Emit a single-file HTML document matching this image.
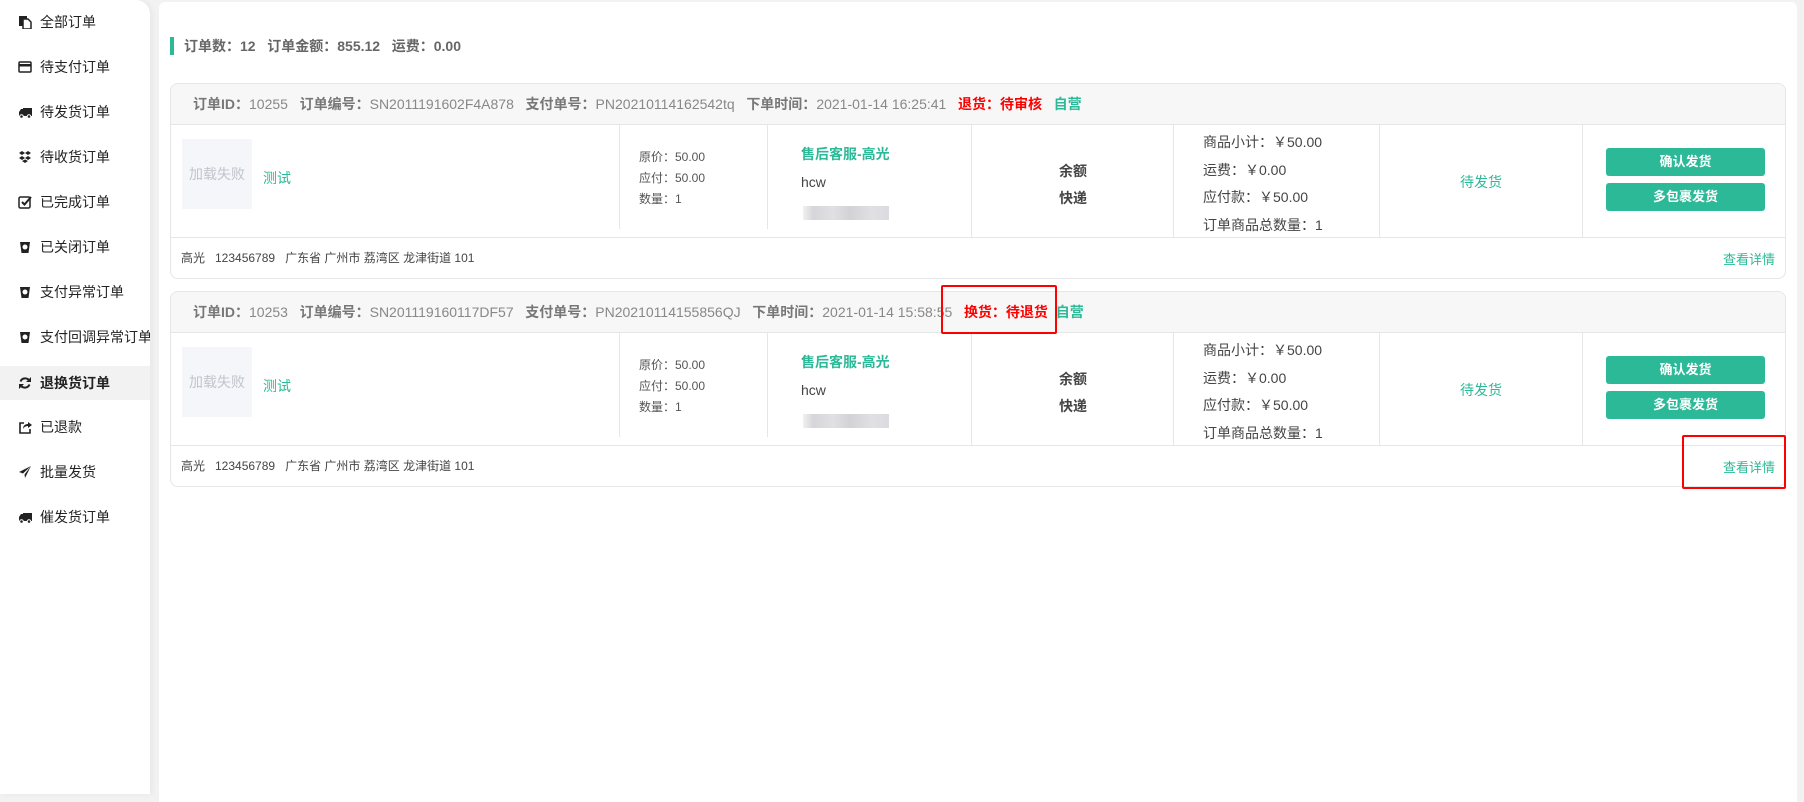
<!DOCTYPE html>
<html><head><meta charset="utf-8"><style>
*{margin:0;padding:0;box-sizing:border-box}
body{width:1804px;height:794px;background:#f2f2f2;font-family:"Liberation Sans","Noto Sans CJK SC",sans-serif;position:relative;overflow:hidden;color:#333}
.side{position:absolute;left:0;top:0;width:150px;height:794px;background:#fff;border-radius:0 14px 0 0;box-shadow:2px 0 6px rgba(0,0,0,.05)}
.it{position:absolute;left:0;width:150px;height:34px;line-height:34px;font-size:14px;color:#222;padding-left:40px;white-space:nowrap;overflow:hidden}
.it svg{position:absolute;left:18px;top:10px;width:14px;height:14px}
.it.act{background:#f2f2f2;font-weight:bold}
.main{position:absolute;left:159px;top:2px;width:1638px;height:800px;background:#fff;border-radius:6px 6px 0 0}
.sum{position:absolute;left:170px;top:37px;height:18px;border-left:4px solid #2bb997;padding-left:10px;font-size:14px;font-weight:bold;color:#666;line-height:18px;word-spacing:0}
.card{position:absolute;left:170px;width:1616px;height:196px;border:1px solid #e6e6e6;border-radius:8px;overflow:hidden;background:#fff}
.hd{height:41px;background:#f7f7f7;border-bottom:1px solid #e6e6e6;line-height:40px;padding-left:22px;font-size:14px;color:#888;white-space:nowrap}
.hd b{color:#777}
.hd .r{color:#f00;font-weight:bold}
.hd .g{color:#2bb997;font-weight:bold}
.abs{position:absolute;white-space:nowrap}
.vl{position:absolute;top:41px;width:1px;background:#e6e6e6}
.ft{position:absolute;left:0;top:153px;width:100%;border-top:1px solid #e6e6e6;height:42px}
.btn{position:absolute;left:1435px;width:159px;height:28px;background:#2bb997;border-radius:3px;color:#fff;font-size:13px;text-align:center;line-height:28px;font-weight:bold}
.red{position:absolute;border:2px solid #f00;border-radius:2px}
</style></head><body>
<div class="side">
<div class="it" style="top:5px"><svg viewBox="0 0 14 14"><rect x="1" y="1" width="8" height="10" fill="#222"/><path d="M5 4h5l3 3v7H5z" fill="#fff" stroke="#222" stroke-width="1.5"/></svg>全部订单</div>
<div class="it" style="top:50px"><svg viewBox="0 0 14 14"><rect x="1" y="2" width="12" height="10" rx="1" fill="none" stroke="#222" stroke-width="1.5"/><rect x="1" y="4" width="12" height="2.5" fill="#222"/></svg>待支付订单</div>
<div class="it" style="top:95px"><svg viewBox="0 0 14 14"><path d="M5 3h9v8H1V7l2-3h2z" fill="#222"/><circle cx="3.5" cy="11.5" r="1.8" fill="#222" stroke="#fff"/><circle cx="11" cy="11.5" r="1.8" fill="#222" stroke="#fff"/></svg>待发货订单</div>
<div class="it" style="top:140px"><svg viewBox="0 0 14 14"><path d="M4 1l3 2-3 2-3-2zM10 1l3 2-3 2-3-2zM4 6l3 2-3 2-3-2zM10 6l3 2-3 2-3-2zM4 11l3-1.5 3 1.5-3 2z" fill="#222"/></svg>待收货订单</div>
<div class="it" style="top:185px"><svg viewBox="0 0 14 14"><rect x="1" y="2" width="11" height="11" rx="1.5" fill="none" stroke="#222" stroke-width="1.5"/><path d="M4 7l2.5 2.5L13 2" fill="none" stroke="#222" stroke-width="2"/></svg>已完成订单</div>
<div class="it" style="top:230px"><svg viewBox="0 0 14 14"><path d="M2 2h10l-1.5 11h-7z" fill="#222"/><circle cx="7" cy="7" r="2.5" fill="#fff"/></svg>已关闭订单</div>
<div class="it" style="top:275px"><svg viewBox="0 0 14 14"><path d="M2 2h10l-1.5 11h-7z" fill="#222"/><circle cx="7" cy="7" r="2.5" fill="#fff"/></svg>支付异常订单</div>
<div class="it" style="top:320px"><svg viewBox="0 0 14 14"><path d="M2 2h10l-1.5 11h-7z" fill="#222"/><circle cx="7" cy="7" r="2.5" fill="#fff"/></svg>支付回调异常订单</div>
<div class="it act" style="top:366px"><svg viewBox="0 0 14 14"><path d="M11.5 5A5 5 0 0 0 2.5 5.5M2.5 9a5 5 0 0 0 9-.5" fill="none" stroke="#222" stroke-width="2"/><path d="M13 1v5H8zM1 13V8h5z" fill="#222"/></svg>退换货订单</div>
<div class="it" style="top:410px"><svg viewBox="0 0 14 14"><path d="M6 3H2v10h10V9" fill="none" stroke="#222" stroke-width="1.6"/><path d="M5 9c0-4 3-5 5-5V2l4 3-4 3V6c-2 0-4 1-5 3z" fill="#222"/></svg>已退款</div>
<div class="it" style="top:455px"><svg viewBox="0 0 14 14"><path d="M13 1L1 7l4 1.5L13 1 6.5 9.5 7 13z" fill="#222"/></svg>批量发货</div>
<div class="it" style="top:500px"><svg viewBox="0 0 14 14"><path d="M5 3h9v8H1V7l2-3h2z" fill="#222"/><circle cx="3.5" cy="11.5" r="1.8" fill="#222" stroke="#fff"/><circle cx="11" cy="11.5" r="1.8" fill="#222" stroke="#fff"/></svg>催发货订单</div>
</div>
<div class="main"></div>
<div class="sum">订单数：12 &nbsp; 订单金额：855.12 &nbsp; 运费：0.00</div>

<div class="card" style="top:83px">
<div class="hd"><b>订单ID：</b>10255 &nbsp; <b>订单编号：</b>SN2011191602F4A878 &nbsp; <b>支付单号：</b>PN20210114162542tq &nbsp; <b>下单时间：</b>2021-01-14 16:25:41 &nbsp; <span class="r">退货：待审核</span> &nbsp; <span class="g">自营</span></div>
<div class="vl" style="left:448px;height:104px"></div><div class="vl" style="left:596px;height:104px"></div><div class="vl" style="left:800px;height:112px"></div><div class="vl" style="left:1002px;height:112px"></div><div class="vl" style="left:1208px;height:112px"></div><div class="vl" style="left:1411px;height:112px"></div>
<div class="abs" style="left:11px;top:55px;width:70px;height:70px;background:#f5f6f9;color:#c0c4cc;font-size:14px;line-height:70px;text-align:center">加载失败</div>
<div class="abs" style="left:92px;top:84px;color:#2bb997;font-size:14px">测试</div>
<div class="abs" style="left:468px;top:63px;font-size:12px;line-height:21px;color:#555">原价：50.00<br>应付：50.00<br>数量：1</div>
<div class="abs" style="left:630px;top:60px;font-size:14px;color:#2bb997;font-weight:bold">售后客服-高光</div>
<div class="abs" style="left:630px;top:90px;font-size:14px;color:#444">hcw</div>
<div class="abs" style="left:632px;top:122px;width:86px;height:14px;background:linear-gradient(90deg,#f3f0ee 0,#d5d5da 12%,#e0e0e4 35%,#d3d3d7 55%,#e0e0e4 80%,#dcdce0)"></div>
<div class="abs" style="left:880px;top:74px;font-size:14px;font-weight:bold;line-height:27px;color:#444;text-align:center;width:44px">余额<br>快递</div>
<div class="abs" style="left:1032px;top:45px;font-size:14px;line-height:27.5px;color:#444">商品小计：￥50.00<br>运费：￥0.00<br>应付款：￥50.00<br>订单商品总数量：1</div>
<div class="abs" style="left:1210px;top:88px;width:200px;text-align:center;font-size:14px;color:#2bb997">待发货</div>
<div class="btn" style="top:64px">确认发货</div><div class="btn" style="top:99px">多包裹发货</div>
<div class="ft"><span class="abs" style="left:10px;top:11px;font-size:12px;color:#444">高光 &nbsp; 123456789 &nbsp; 广东省 广州市 荔湾区 龙津街道 101</span><span class="abs" style="right:10px;top:11px;font-size:13px;color:#2bb997">查看详情</span></div>
</div>

<div class="card" style="top:291px">
<div class="hd"><b>订单ID：</b>10253 &nbsp; <b>订单编号：</b>SN201119160117DF57 &nbsp; <b>支付单号：</b>PN20210114155856QJ &nbsp; <b>下单时间：</b>2021-01-14 15:58:55 &nbsp; <span class="r">换货：待退货</span> &nbsp;<span class="g">自营</span></div>
<div class="vl" style="left:448px;height:104px"></div><div class="vl" style="left:596px;height:104px"></div><div class="vl" style="left:800px;height:112px"></div><div class="vl" style="left:1002px;height:112px"></div><div class="vl" style="left:1208px;height:112px"></div><div class="vl" style="left:1411px;height:112px"></div>
<div class="abs" style="left:11px;top:55px;width:70px;height:70px;background:#f5f6f9;color:#c0c4cc;font-size:14px;line-height:70px;text-align:center">加载失败</div>
<div class="abs" style="left:92px;top:84px;color:#2bb997;font-size:14px">测试</div>
<div class="abs" style="left:468px;top:63px;font-size:12px;line-height:21px;color:#555">原价：50.00<br>应付：50.00<br>数量：1</div>
<div class="abs" style="left:630px;top:60px;font-size:14px;color:#2bb997;font-weight:bold">售后客服-高光</div>
<div class="abs" style="left:630px;top:90px;font-size:14px;color:#444">hcw</div>
<div class="abs" style="left:632px;top:122px;width:86px;height:14px;background:linear-gradient(90deg,#f3f0ee 0,#d5d5da 12%,#e0e0e4 35%,#d3d3d7 55%,#e0e0e4 80%,#dcdce0)"></div>
<div class="abs" style="left:880px;top:74px;font-size:14px;font-weight:bold;line-height:27px;color:#444;text-align:center;width:44px">余额<br>快递</div>
<div class="abs" style="left:1032px;top:45px;font-size:14px;line-height:27.5px;color:#444">商品小计：￥50.00<br>运费：￥0.00<br>应付款：￥50.00<br>订单商品总数量：1</div>
<div class="abs" style="left:1210px;top:88px;width:200px;text-align:center;font-size:14px;color:#2bb997">待发货</div>
<div class="btn" style="top:64px">确认发货</div><div class="btn" style="top:99px">多包裹发货</div>
<div class="ft"><span class="abs" style="left:10px;top:11px;font-size:12px;color:#444">高光 &nbsp; 123456789 &nbsp; 广东省 广州市 荔湾区 龙津街道 101</span><span class="abs" style="right:10px;top:11px;font-size:13px;color:#2bb997">查看详情</span></div>
</div>

<div class="red" style="left:941px;top:285px;width:116px;height:49px"></div>
<div class="red" style="left:1682px;top:435px;width:104px;height:54px"></div>
</body></html>
